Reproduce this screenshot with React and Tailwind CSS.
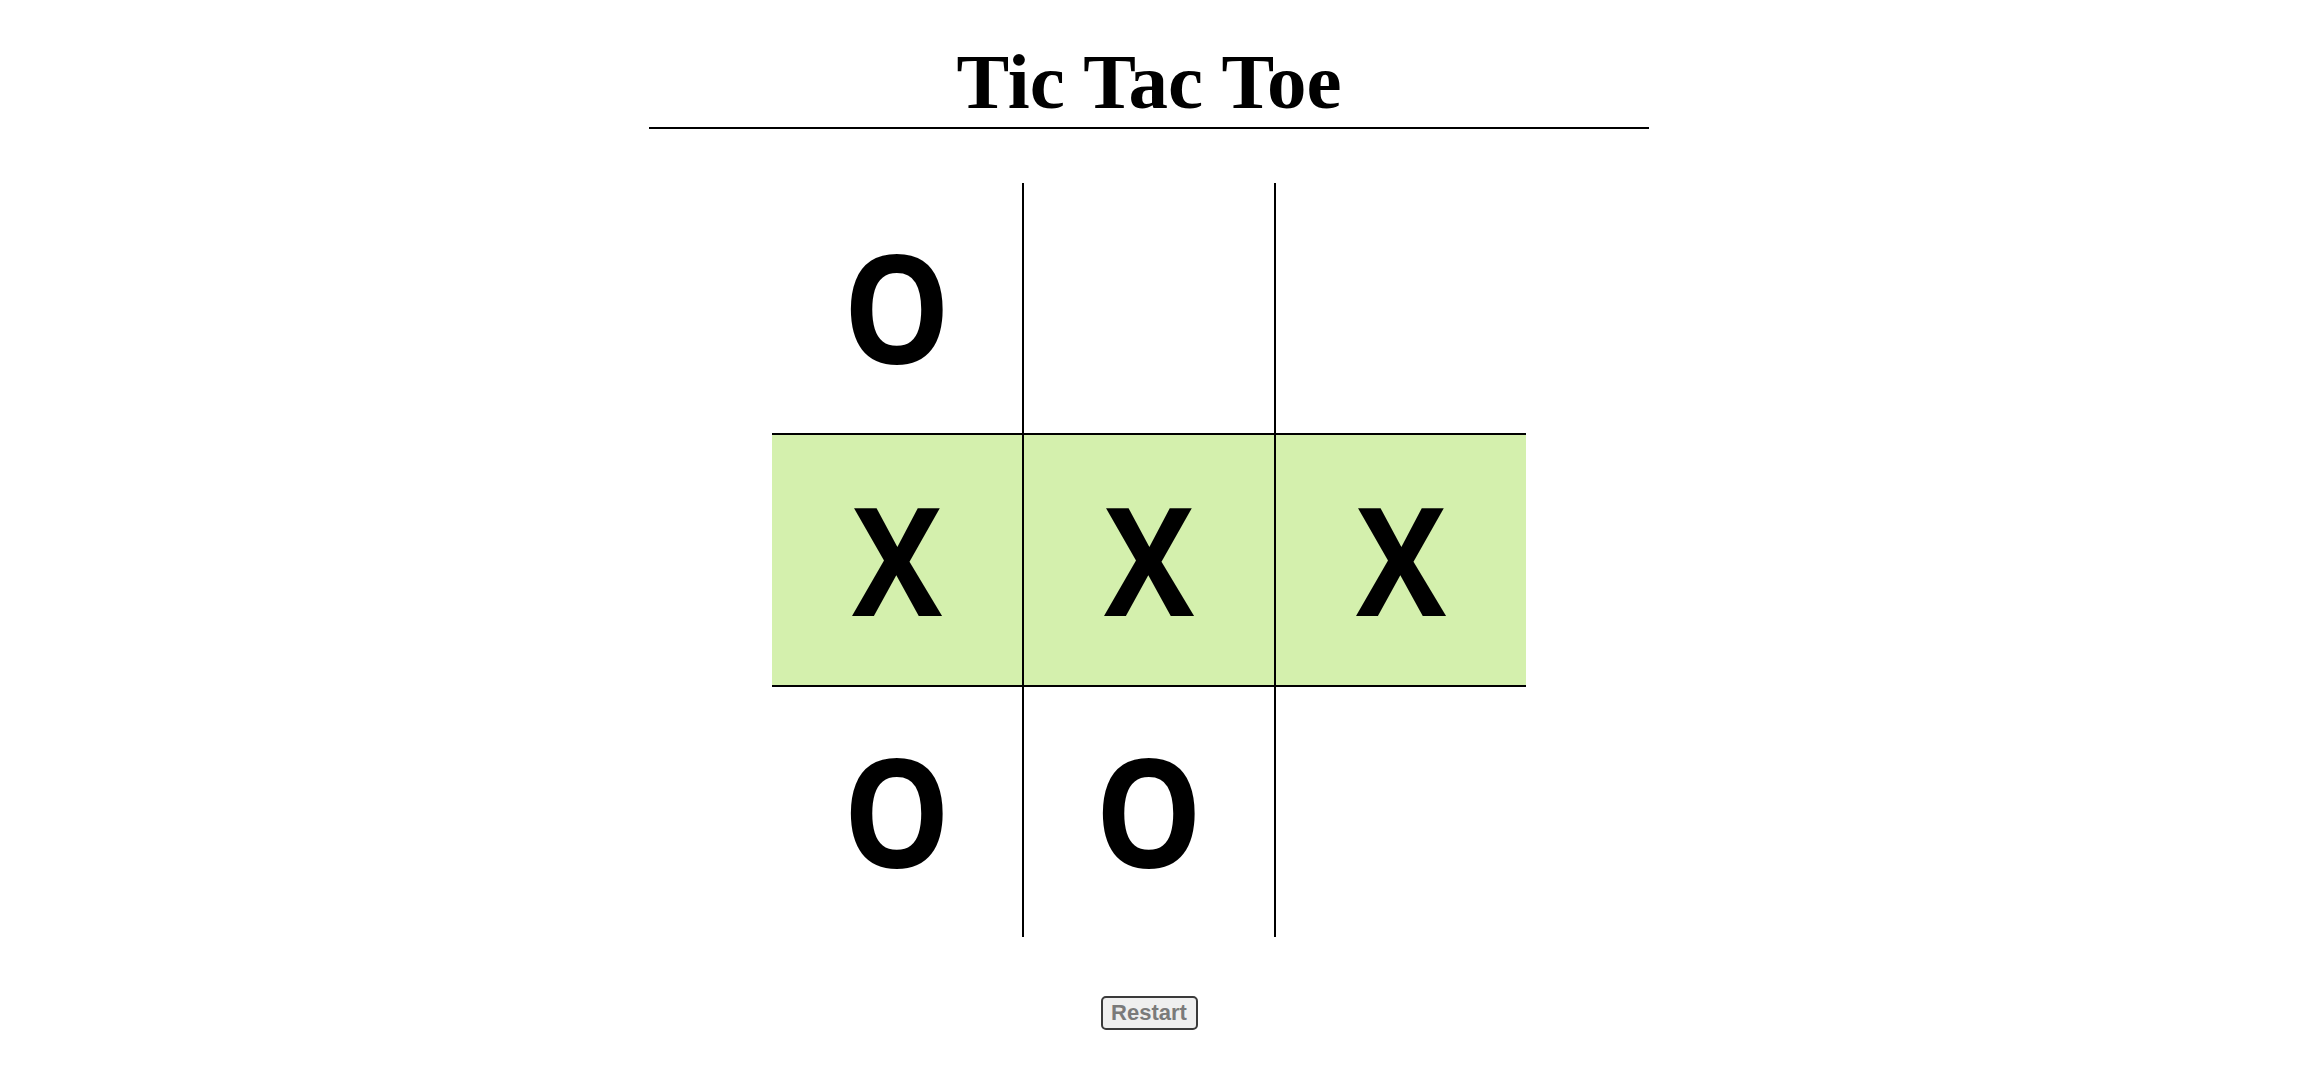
const board = [
  ['O', '', ''],
  ['X', 'X', 'X'],
  ['O', 'O', ''],
];
const winRow = 1;

function Cell({ value, win }) {
  return (
    <div
      className={`w-[250px] h-[250px] flex items-center justify-center pb-[4px] ${win ? 'bg-[#d4f0ad]' : 'bg-white'}`}
    >
      {value === 'X' && (
        <span className="font-['Open_Sans',sans-serif] font-bold text-[150px] leading-none text-black scale-x-[0.9] inline-block">
          X
        </span>
      )}
      {value === 'O' && (
        <span className="font-['Open_Sans',sans-serif] font-bold text-[150px] leading-none text-black scale-x-[0.9] inline-block">
          O
        </span>
      )}
    </div>
  );
}

export default function App() {
  return (
    <div className="w-[2298px] min-h-[1090px] bg-white flex flex-col items-center">
      <h1 className="mt-[42px] font-['Liberation_Serif',serif] font-bold text-[79px] leading-none text-black">
        Tic Tac Toe
      </h1>
      <div className="mt-[6px] w-[1000px] h-[2px] bg-black" />
      <div className="mt-[54px] grid grid-cols-[250px_250px_250px] gap-[2px] bg-black">
        {board.map((row, r) =>
          row.map((v, c) => <Cell key={`${r}-${c}`} value={v} win={r === winRow} />)
        )}
      </div>
      <button
        type="button"
        className="mt-[59px] w-[97px] h-[34px] flex items-center justify-center rounded-[5px] border-2 border-[#3a3a3a] bg-[#efefef] font-['Liberation_Sans',sans-serif] font-bold text-[22px] leading-none text-[#7a7a7a]"
      >
        Restart
      </button>
    </div>
  );
}
